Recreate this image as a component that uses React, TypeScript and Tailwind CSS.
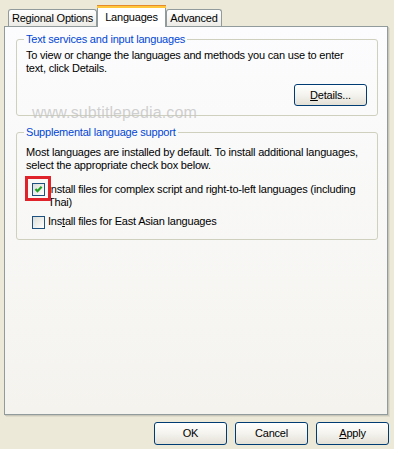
const font = { fontFamily: '"Liberation Sans", Arial, sans-serif' };

function Tab({ label, selected }: { label: string; selected?: boolean }) {
  if (selected) {
    return (
      <div className="relative z-10 -mb-px flex h-[22px] w-[69px] flex-col border-x border-[#919B9C] bg-white">
        <div className="h-px -mx-px rounded-t-[2px] bg-[#E68B2C]" />
        <div className="h-[2px] -mx-px bg-[#FFC73C]" />
        <div className="flex flex-1 items-start justify-center whitespace-nowrap pt-[3px] leading-[13px]">{label}</div>
      </div>
    );
  }
  return (
    <div className="flex h-[17px] items-center justify-center whitespace-nowrap rounded-t-[3px] border-x border-t border-[#919B9C] bg-linear-to-b from-[#FFFFFF] to-[#ECEBE6] pt-px leading-[13px]">
      {label}
    </div>
  );
}

function Button({ children, w = 'w-[73px]', h = 'h-[23px]' }: { children: React.ReactNode; w?: string; h?: string }) {
  return (
    <div className={`${w} ${h} flex items-center justify-center rounded-[3px] border border-[#003C74] bg-linear-to-b from-[#FFFFFF] via-[#F4F3EE] to-[#E3E0D6] leading-[13px]`}>
      {children}
    </div>
  );
}

function Checkbox({ checked }: { checked?: boolean }) {
  return (
    <div className="flex h-[13px] w-[13px] shrink-0 items-center justify-center border border-[#1C5180] bg-linear-to-br from-[#DCDCD7] to-[#FFFFFF]">
      {checked && (
        <svg width="11" height="11" viewBox="0 0 11 11">
          <path d="M2.5 5 L4.5 7.2 L8.6 2.8" fill="none" stroke="#21A121" strokeWidth="2.2" />
        </svg>
      )}
    </div>
  );
}

export default function App() {
  return (
    <div className="relative h-[449px] w-[394px] overflow-hidden bg-[#ECE9D8] text-[11px] tracking-[-0.2px] text-black" style={font}>
      {/* tabs */}
      <div className="flex h-[26px] items-end pl-[8px]">
        <div className="w-[89px]">
          <Tab label="Regional Options" />
        </div>
        <Tab label="Languages" selected />
        <div className="w-[56px]">
          <Tab label="Advanced" />
        </div>
      </div>

      {/* panel */}
      <div className="ml-[4px] flex h-[389px] w-[384px] flex-col border border-[#919B9C] bg-linear-to-b from-[#FCFCFE] to-[#F4F3EE] shadow-[1px_1px_0_#C9C7BA,2px_2px_0_#DEDBCB]">
        <fieldset className="ml-[11px] mt-[6px] w-[362px] rounded-[3px] border border-[#D0D0BF] pb-[9px] pl-[9px] pr-[10px]">
          <legend className="-ml-[2px] px-[2px] leading-[13px] text-[#0046D5]">Text services and input languages</legend>
          <div className="flex flex-col pt-[3px]">
            <p className="whitespace-nowrap leading-[13px]">
              To view or change the languages and methods you can use to enter
              <br />
              text, click Details.
            </p>
            <div className="mt-[9px] self-end">
              <Button h="h-[22px]">
                <span>
                  <span className="underline underline-offset-1">D</span>etails...
                </span>
              </Button>
            </div>
          </div>
        </fieldset>

        <fieldset className="ml-[11px] mt-[10px] w-[362px] rounded-[3px] border border-[#D0D0BF] pb-[10px] pl-[9px] pr-[10px]">
          <legend className="-ml-[2px] px-[2px] leading-[13px] text-[#0046D5]">Supplemental language support</legend>
          <div className="flex flex-col pt-[7px]">
            <p className="whitespace-nowrap leading-[13px]">
              Most languages are installed by default. To install additional languages,
              <br />
              select the appropriate check box below.
            </p>
            <div className="mt-[11px] flex items-start">
              <div className="relative ml-[6px]">
                <Checkbox checked />
                <span className="absolute -left-[7px] -top-[7px] h-[25px] w-[26px] border-[3px] border-[#E0222A]" />
              </div>
              <p className="ml-[3px] whitespace-nowrap leading-[13px]">
                <span className="underline underline-offset-1">I</span>nstall files for complex script and right-to-left languages (including
                <br />
                Thai)
              </p>
            </div>
            <div className="mt-[6px] flex items-start">
              <div className="ml-[6px] mt-px">
                <Checkbox />
              </div>
              <p className="ml-[3px] whitespace-nowrap leading-[13px]">
                Ins<span className="underline underline-offset-1">t</span>all files for East Asian languages
              </p>
            </div>
          </div>
        </fieldset>
      </div>

      {/* buttons */}
      <div className="mt-[7px] flex justify-end gap-[8px] pr-[5px]">
        <Button>OK</Button>
        <Button>Cancel</Button>
        <Button>
          <span>
            <span className="underline underline-offset-1">A</span>pply
          </span>
        </Button>
      </div>

      {/* watermark */}
      <div className="pointer-events-none absolute left-[32px] top-[104px] text-[16px] leading-[18px] tracking-[0.1px] text-[#C4C4C4]/80">
        www.subtitlepedia.com
      </div>
    </div>
  );
}
